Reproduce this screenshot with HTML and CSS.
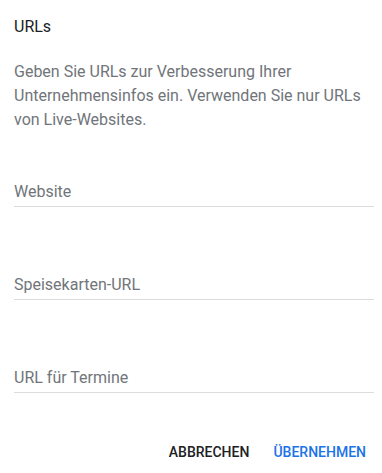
FILE: index.html
```html
<!DOCTYPE html>
<html lang="de">
<head>
<meta charset="utf-8">
<title>URLs</title>
<link rel="stylesheet" href="styles.css">
</head>
<body>
<div class="dialog">
  <h1 class="title">URLs</h1>
  <p class="desc">Geben Sie URLs zur Verbesserung Ihrer Unternehmensinfos ein. Verwenden Sie nur URLs von Live-Websites.</p>
  <div class="fields">
    <div class="field"><span class="label">Website</span></div>
    <div class="field"><span class="label">Speisekarten-URL</span></div>
    <div class="field"><span class="label">URL für Termine</span></div>
  </div>
  <div class="actions">
    <button class="btn btn-cancel">Abbrechen</button>
    <button class="btn btn-apply">Übernehmen</button>
  </div>
</div>
</body>
</html>
```
FILE: styles.css
```css
html, body {
  margin: 0;
  padding: 0;
  background: #ffffff;
}
body {
  font-family: Roboto, "Noto Sans", Arial, sans-serif;
  width: 382px;
  height: 473px;
  overflow: hidden;
}
.dialog {
  padding: 15px 8px 0 14px;
}
.title {
  margin: 0;
  font-size: 16px;
  font-weight: 400;
  line-height: 24px;
  color: #202124;
}
.desc {
  margin: 21px 0 0 0;
  font-size: 16px;
  line-height: 24px;
  color: #70757a;
}
.fields {
  display: flex;
  flex-direction: column;
  gap: 66px;
  margin-top: 48px;
}
.field {
  border-bottom: 1px solid #dadce0;
  padding-bottom: 2px;
}
.label {
  display: block;
  font-size: 16px;
  line-height: 24px;
  color: #70757a;
}
.actions {
  display: flex;
  justify-content: flex-end;
  gap: 8px;
  margin-top: 41px;
}
.btn {
  font-family: Roboto, "Noto Sans", Arial, sans-serif;
  font-size: 14px;
  font-weight: 500;
  line-height: 20px;
  text-transform: uppercase;
  background: none;
  border: none;
  padding: 8px;
  margin: 0;
  cursor: pointer;
}
.btn-cancel {
  color: #202124;
}
.btn-apply {
  color: #1a73e8;
}
```
